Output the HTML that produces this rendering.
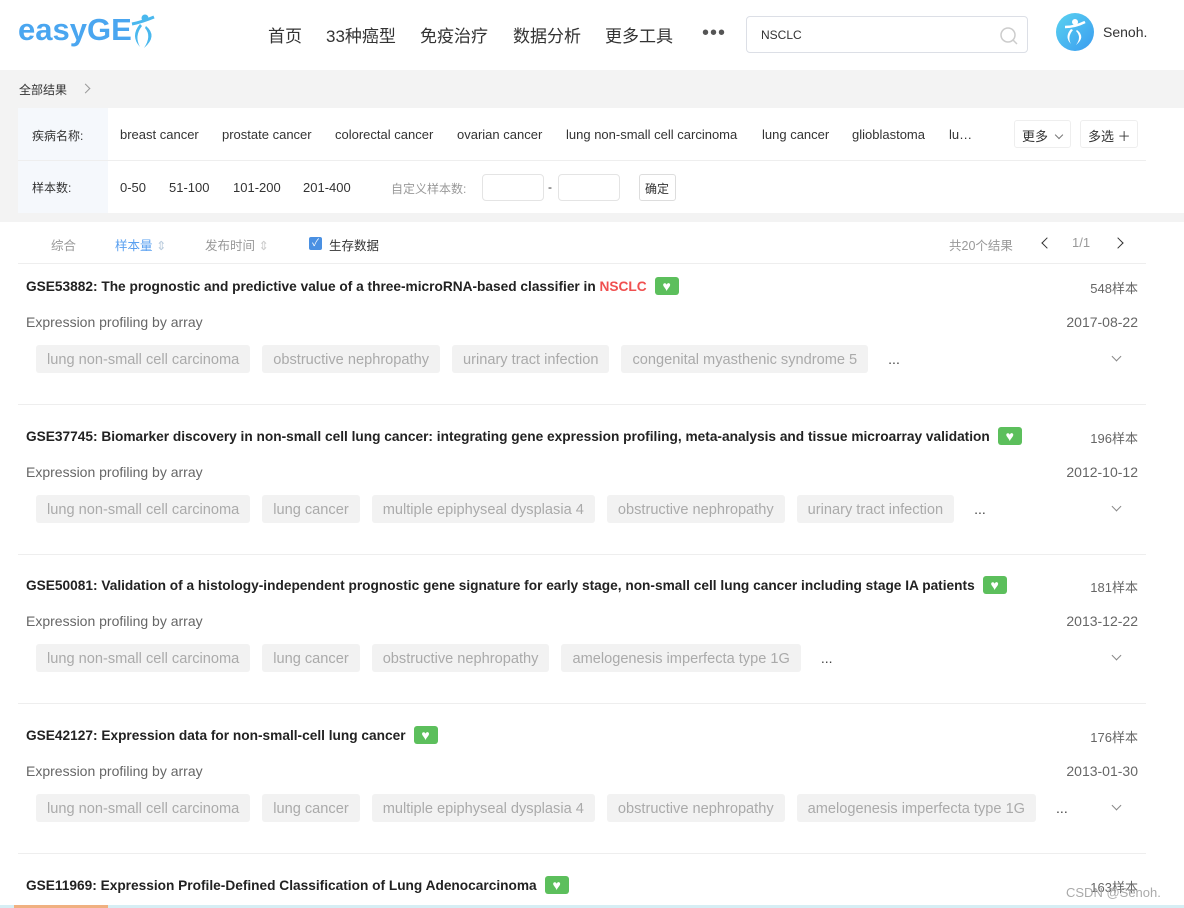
<!DOCTYPE html>
<html><head><meta charset="utf-8">
<style>
*{margin:0;padding:0;box-sizing:border-box}
html,body{width:1184px;height:908px;overflow:hidden}
body{background:#fff;font-family:"Liberation Sans","Noto Sans CJK SC",sans-serif;color:#333;position:relative}
.a{position:absolute;white-space:nowrap}
.nav{font-size:17px;color:#333;top:22px}
.gray{background:#f3f3f3}
.card{position:absolute;left:18px;width:1128px;height:150px;border-bottom:1px solid #eee;overflow:hidden}
.t{position:absolute;left:8px;top:22px;font-size:13.7px;font-weight:bold;color:#222;display:flex;align-items:center}
.t .hb{display:inline-block;width:24px;height:18px;background:#5cbf5c;border-radius:3px;margin-left:8px;position:relative}
.t .hb:before{content:"♥";position:absolute;left:0;top:0;width:24px;text-align:center;color:#fff;font-size:14px;line-height:18px;font-weight:normal}
.sub{position:absolute;left:8px;top:59px;font-size:14px;color:#666}
.n{position:absolute;right:8px;top:23px;font-size:13px;color:#666}
.d{position:absolute;right:8px;top:59px;font-size:14px;color:#666}
.tags{position:absolute;left:18px;top:90px;display:flex;align-items:center}
.tag{background:#f2f2f2;color:#aaa;font-size:14.6px;height:28px;line-height:30px;padding:0 11px;border-radius:3px;margin-right:12px}
.dots{color:#444;font-size:14px;margin-left:8px}
.chev{position:absolute;right:26px;top:98px;width:7px;height:7px;border-right:1.3px solid #888;border-bottom:1.3px solid #888;transform:rotate(45deg)}
</style></head><body>
<div class="a" style="left:18px;top:12px;font-size:31px;font-weight:bold;color:#4aa6f0">easyGE</div>
<svg class="a" style="left:128px;top:14px" width="30" height="36" viewBox="0 0 30 36"><circle cx="17" cy="4" r="3.5" fill="#4ab8ee"/><path d="M4 10 Q14 8 26 3" stroke="#4ab8ee" stroke-width="3" fill="none"/><path d="M12 10 Q2 22 12 33 Q6 22 14 12Z" fill="#4ab8ee"/><path d="M18 12 Q30 22 16 34 Q24 22 17 14Z" fill="#4ab8ee"/></svg>
<div class="a nav" style="left:268px">首页</div>
<div class="a nav" style="left:326px">33种癌型</div>
<div class="a nav" style="left:420px">免疫治疗</div>
<div class="a nav" style="left:513px">数据分析</div>
<div class="a nav" style="left:605px">更多工具</div>
<div class="a" style="left:702px;top:22px;font-size:20px;color:#555;letter-spacing:1px">•••</div>
<div class="a" style="left:746px;top:16px;width:282px;height:37px;border:1px solid #dcdfe6;border-radius:4px"></div>
<div class="a" style="left:761px;top:28px;font-size:12px;color:#333">NSCLC</div>
<svg class="a" style="left:999px;top:26px" width="20" height="20"><circle cx="9" cy="9" r="7" stroke="#ccc" stroke-width="1.5" fill="none"/><path d="M14 14 L18 18" stroke="#ccc" stroke-width="1.5"/></svg>
<svg class="a" style="left:1056px;top:13px" width="38" height="38"><defs><linearGradient id="g" x1="0" y1="0" x2="1" y2="1"><stop offset="0" stop-color="#5ad2f0"/><stop offset="1" stop-color="#3a9cf0"/></linearGradient></defs><circle cx="19" cy="19" r="19" fill="url(#g)"/><circle cx="19" cy="9" r="3" fill="#fff"/><path d="M9 14 Q19 14 29 9" stroke="#fff" stroke-width="2.5" fill="none"/><path d="M15 16 Q8 24 15 31 Q11 24 17 17Z" fill="#fff"/><path d="M21 17 Q30 24 20 32 Q26 24 20 18Z" fill="#fff"/></svg>
<div class="a" style="left:1103px;top:24px;font-size:14px;color:#333">Senoh.</div>
<div class="a gray" style="left:0;top:70px;width:1184px;height:38px"></div>
<div class="a" style="left:19px;top:81px;font-size:12px;color:#333">全部结果</div>
<div class="a" style="left:82px;top:85px;width:7px;height:7px;border-right:1.2px solid #999;border-top:1.2px solid #999;transform:rotate(45deg)"></div>
<div class="a gray" style="left:0;top:108px;width:18px;height:114px"></div>
<div class="a gray" style="left:0;top:213px;width:1184px;height:9px"></div>
<div class="a" style="left:18px;top:108px;width:90px;height:105px;background:#f5f8fc"></div>
<div class="a" style="left:18px;top:160px;width:1128px;height:1px;background:#eee"></div>
<div class="a" style="left:32px;top:127px;font-size:12px;color:#333">疾病名称:</div>
<div class="a" style="left:32px;top:179px;font-size:12px;color:#333">样本数:</div>
<div class="a" style="top:127px;font-size:13px;color:#333;left:120px">breast cancer</div>
<div class="a" style="top:127px;font-size:13px;color:#333;left:222px">prostate cancer</div>
<div class="a" style="top:127px;font-size:13px;color:#333;left:335px">colorectal cancer</div>
<div class="a" style="top:127px;font-size:13px;color:#333;left:457px">ovarian cancer</div>
<div class="a" style="top:127px;font-size:13px;color:#333;left:566px">lung non-small cell carcinoma</div>
<div class="a" style="top:127px;font-size:13px;color:#333;left:762px">lung cancer</div>
<div class="a" style="top:127px;font-size:13px;color:#333;left:852px">glioblastoma</div>
<div class="a" style="top:127px;font-size:13px;color:#333;left:949px">lu…</div>
<div class="a" style="left:1014px;top:120px;width:57px;height:28px;border:1px solid #eee;border-radius:3px;font-size:13px;padding:5px 7px">更多 <span style="display:inline-block;width:6px;height:6px;border-right:1px solid #777;border-bottom:1px solid #777;transform:rotate(45deg);margin:0 0 3px 4px"></span></div>
<div class="a" style="left:1080px;top:120px;width:58px;height:28px;border:1px solid #eee;border-radius:3px;font-size:13px;padding:5px 7px">多选 ＋</div>
<div class="a" style="top:180px;font-size:13px;color:#333;left:120px">0-50</div>
<div class="a" style="top:180px;font-size:13px;color:#333;left:169px">51-100</div>
<div class="a" style="top:180px;font-size:13px;color:#333;left:233px">101-200</div>
<div class="a" style="top:180px;font-size:13px;color:#333;left:303px">201-400</div>
<div class="a" style="top:180px;font-size:12px;color:#999;left:391px">自定义样本数:</div>
<div class="a" style="left:482px;top:174px;width:62px;height:27px;border:1px solid #e4e4e4;border-radius:4px"></div>
<div class="a" style="left:548px;top:180px;font-size:12px;color:#333">-</div>
<div class="a" style="left:558px;top:174px;width:62px;height:27px;border:1px solid #e4e4e4;border-radius:4px"></div>
<div class="a" style="left:639px;top:174px;width:37px;height:27px;border:1px solid #ddd;border-radius:3px;font-size:12px;padding:5px 5px">确定</div>
<div class="a" style="left:51px;top:235px;font-size:12.5px;color:#999">综合</div>
<div class="a" style="left:115px;top:235px;font-size:12.5px;color:#5aa0f0">样本量 <span style="color:#bcd">⇕</span></div>
<div class="a" style="left:205px;top:235px;font-size:12.5px;color:#999">发布时间 <span style="color:#ccc">⇕</span></div>
<div class="a" style="left:309px;top:237px;width:13px;height:13px;background:#4a90e2;border-radius:2px;color:#fff;font-size:10px;text-align:center;line-height:13px">✓</div>
<div class="a" style="left:329px;top:235px;font-size:12.5px;color:#333">生存数据</div>
<div class="a" style="left:949px;top:235px;font-size:12.5px;color:#999">共20个结果</div>
<div class="a" style="left:1043px;top:239px;width:8px;height:8px;border-left:1.5px solid #333;border-bottom:1.5px solid #333;transform:rotate(45deg)"></div>
<div class="a" style="left:1072px;top:235px;font-size:13px;color:#999">1/1</div>
<div class="a" style="left:1114px;top:239px;width:8px;height:8px;border-right:1.5px solid #333;border-top:1.5px solid #333;transform:rotate(45deg)"></div>
<div class="a" style="left:18px;top:263px;width:1128px;height:1px;background:#eee"></div>

<div class="card" style="top:255px">
<div class="t">GSE53882: The prognostic and predictive value of a three-microRNA-based classifier in&nbsp;<span style="color:#f05050">NSCLC</span><span class="hb"></span></div>
<div class="n">548样本</div><div class="sub">Expression profiling by array</div><div class="d">2017-08-22</div>
<div class="tags"><span class="tag">lung non-small cell carcinoma</span><span class="tag">obstructive nephropathy</span><span class="tag">urinary tract infection</span><span class="tag">congenital myasthenic syndrome 5</span><span class="dots">...</span></div><div class="chev"></div></div>

<div class="card" style="top:405px">
<div class="t">GSE37745: Biomarker discovery in non-small cell lung cancer: integrating gene expression profiling, meta-analysis and tissue microarray validation<span class="hb"></span></div>
<div class="n">196样本</div><div class="sub">Expression profiling by array</div><div class="d">2012-10-12</div>
<div class="tags"><span class="tag">lung non-small cell carcinoma</span><span class="tag">lung cancer</span><span class="tag">multiple epiphyseal dysplasia 4</span><span class="tag">obstructive nephropathy</span><span class="tag">urinary tract infection</span><span class="dots">...</span></div><div class="chev"></div></div>

<div class="card" style="top:554px">
<div class="t">GSE50081: Validation of a histology-independent prognostic gene signature for early stage, non-small cell lung cancer including stage IA patients<span class="hb"></span></div>
<div class="n">181样本</div><div class="sub">Expression profiling by array</div><div class="d">2013-12-22</div>
<div class="tags"><span class="tag">lung non-small cell carcinoma</span><span class="tag">lung cancer</span><span class="tag">obstructive nephropathy</span><span class="tag">amelogenesis imperfecta type 1G</span><span class="dots">...</span></div><div class="chev"></div></div>

<div class="card" style="top:704px">
<div class="t">GSE42127: Expression data for non-small-cell lung cancer<span class="hb"></span></div>
<div class="n">176样本</div><div class="sub">Expression profiling by array</div><div class="d">2013-01-30</div>
<div class="tags"><span class="tag">lung non-small cell carcinoma</span><span class="tag">lung cancer</span><span class="tag">multiple epiphyseal dysplasia 4</span><span class="tag">obstructive nephropathy</span><span class="tag">amelogenesis imperfecta type 1G</span><span class="dots">...</span></div><div class="chev"></div></div>

<div class="card" style="top:854px;height:51px;border:none">
<div class="t">GSE11969: Expression Profile-Defined Classification of Lung Adenocarcinoma<span class="hb"></span></div>
<div class="n">163样本</div></div>
<div class="a" style="left:1066px;top:885px;font-size:13px;color:#aaa">CSDN @Senoh.</div>
<div class="a" style="left:0;top:905px;width:1184px;height:3px;background:#d6eef4"></div>
<div class="a" style="left:14px;top:905px;width:94px;height:3px;background:#f0b080"></div>
</body></html>
